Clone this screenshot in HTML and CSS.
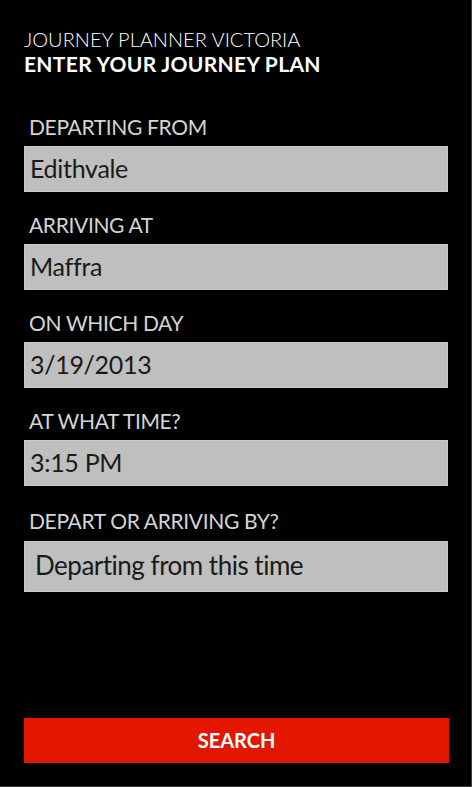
FILE: index.html
```html
<!DOCTYPE html>
<html lang="en">
<head>
<meta charset="utf-8">
<title>Journey Planner Victoria</title>
<link rel="stylesheet" href="styles.css">
</head>
<body>
<div class="frame">
  <header class="header">
    <div class="app-title">JOURNEY PLANNER VICTORIA</div>
    <div class="page-title">ENTER YOUR JOURNEY PLAN</div>
  </header>
  <main class="form">
    <div class="field">
      <div class="label">DEPARTING FROM</div>
      <div class="box">Edithvale</div>
    </div>
    <div class="field">
      <div class="label">ARRIVING AT</div>
      <div class="box">Maffra</div>
    </div>
    <div class="field">
      <div class="label">ON WHICH DAY</div>
      <div class="box">3/19/2013</div>
    </div>
    <div class="field">
      <div class="label">AT WHAT TIME?</div>
      <div class="box">3:15 PM</div>
    </div>
    <div class="field picker">
      <div class="label">DEPART OR ARRIVING BY?</div>
      <div class="box box-picker">Departing from this time</div>
    </div>
  </main>
  <button class="search">SEARCH</button>
</div>
</body>
</html>
```

FILE: styles.css
```css
html, body {
  margin: 0;
  padding: 0;
  background: #000;
}
body {
  font-family: Lato, "Open Sans", sans-serif;
  font-variant-ligatures: none;
  font-feature-settings: "liga" 0, "dlig" 0;
}
.frame {
  box-sizing: border-box;
  width: 472px;
  height: 787px;
  border-right: 1px solid #3c3c3c;
  border-bottom: 1px solid #3c3c3c;
  padding: 28px 23px 23px 24px;
  display: flex;
  flex-direction: column;
}
.header {
  color: #fff;
  font-size: 20px;
  line-height: 23.5px;
}
.app-title {
  font-weight: 300;
}
.page-title {
  font-weight: 700;
  font-size: 21px;
  letter-spacing: 0.3px;
}
.form {
  margin-top: 38px;
  display: flex;
  flex-direction: column;
  gap: 19px;
}
.field {
  display: flex;
  flex-direction: column;
  gap: 5px;
}
.picker {
  margin-top: 2px;
  gap: 6px;
}
.label {
  color: #d4d4d4;
  font-size: 21px;
  letter-spacing: -0.35px;
  line-height: 28px;
  padding-left: 5px;
}
.box {
  box-sizing: border-box;
  height: 46px;
  background: #bfbfbf;
  border: 1px solid #c9c9c9;
  color: #1a1a1a;
  font-size: 25px;
  letter-spacing: -0.3px;
  line-height: 42px;
  padding: 0 5px 2px;
}
.box-picker {
  height: 51px;
  font-size: 26px;
  letter-spacing: -0.5px;
  line-height: 47px;
  padding-left: 10px;
}
.search {
  margin-top: auto;
  height: 45px;
  width: 425px;
  border: none;
  padding: 0;
  background: #e31700;
  color: #fff;
  font-family: Lato, "Open Sans", sans-serif;
  font-weight: 700;
  font-size: 20px;
  line-height: 45px;
}
```
